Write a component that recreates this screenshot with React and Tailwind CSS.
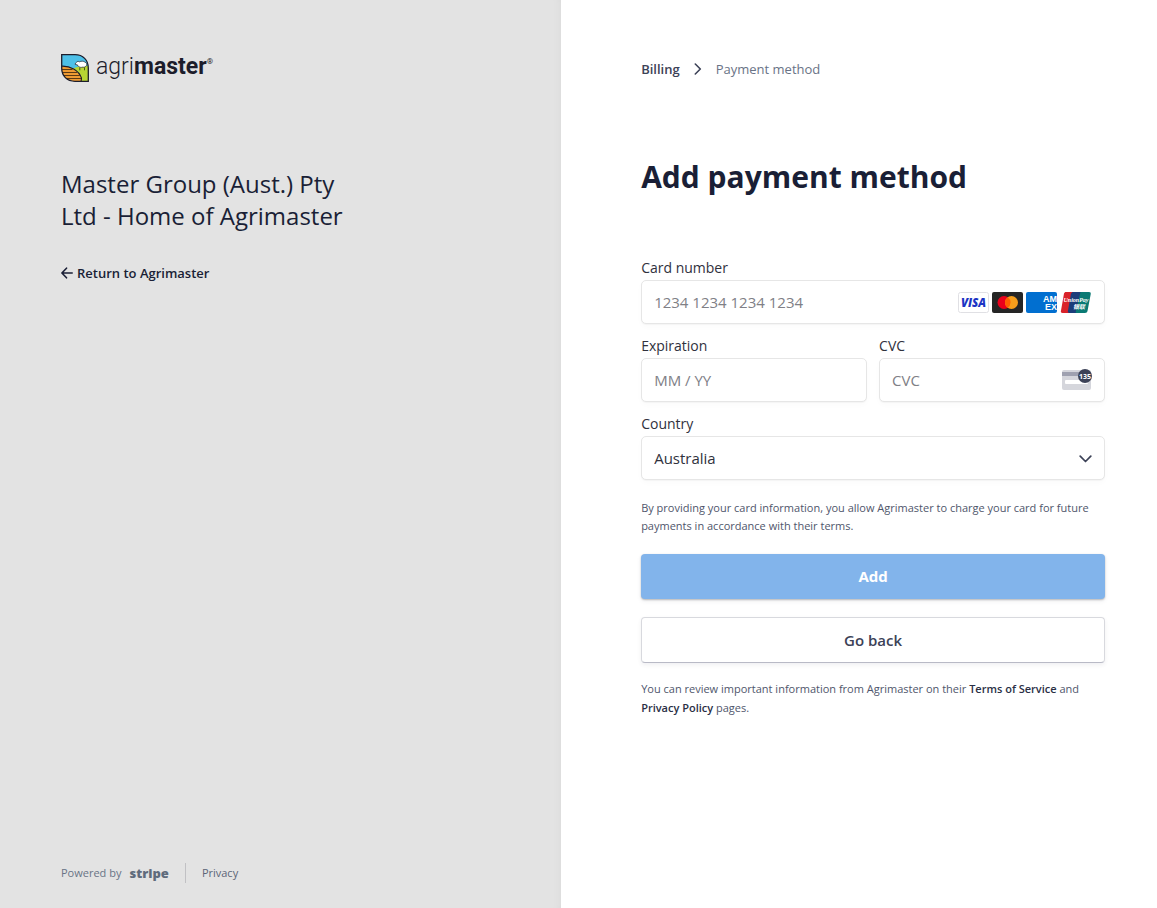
import React, { useState } from "react";

const inputClass =
  "block w-full h-11 rounded-[5px] border border-[#e6e6e6] bg-white px-3 text-[15px] text-[#30313d] placeholder:text-[#808086] shadow-[0_1px_1px_rgba(0,0,0,0.03),0_3px_6px_rgba(0,0,0,0.02)] outline-none focus:border-[#0570de]";

const labelClass = "block mb-[3px] text-[14px] leading-[19px] text-[#30313d]";

function AgrimasterLogo() {
  return (
    <div className="flex h-7 items-start gap-[7px] text-[#1d1d2b]">
      <svg width="28" height="28" viewBox="0 0 28 28" aria-hidden="true">
        <defs>
          <clipPath id="leaf">
            <path d="M.7.7H14C22 .7 27.300 6 27.300 14v13.300H14C6 27.300.7 22 .7 14z" />
          </clipPath>
        </defs>
        <g clipPath="url(#leaf)">
          <rect width="28" height="28" fill="#4dc0e8" />
          <path d="M11 15c5-2.500 10-4 17-3v16H18z" fill="#b7d433" />
          <path
            d="M0 12.200c9-.6 18 4 20.500 12L20 28H0z"
            fill="#ee9a33"
            stroke="#1d1d2b"
            strokeWidth="1.100"
          />
          <path
            d="M0 15.500h11.500M0 18.500h16M2 21.500h17M4 24.500h16"
            stroke="#5c3a14"
            strokeWidth="1.100"
          />
          <path
            d="M15.500 8.300c.9-1.200 2.200-1 2.800-.5 2-.9 4.400-.8 5.600.3 1.600.6 2.200 2 1.500 3.500-.8 1.500-2.400 1.900-3.500 1.500-1.700.6-3.400.2-4-.7-.9-.1-1.500-.7-1.400-1.500l-2.300-.5c0-1.100.5-1.800 1.300-2.100z"
            fill="#fff"
            stroke="#1d1d2b"
            strokeWidth=".7"
          />
          <path d="M18.800 13.500v2.800M23.500 13.500v2.800" stroke="#3c4a1a" strokeWidth=".9" />
        </g>
        <path
          d="M.7.7H14C22 .7 27.300 6 27.300 14v13.300H14C6 27.300.7 22 .7 14z"
          fill="none"
          stroke="#1d1d2b"
          strokeWidth="1.300"
        />
      </svg>
      <span className="flex items-start font-[Roboto,sans-serif] text-[23px] leading-[26px]">
        <span className="font-light">agri</span>
        <span className="font-bold">master</span>
        <span className="text-[8px] leading-4">®</span>
      </span>
    </div>
  );
}

function CardBrands() {
  return (
    <div className="pointer-events-none absolute inset-y-0 right-[14px] flex items-center gap-[3px]">
      <svg width="31" height="21" viewBox="0 0 31 21" role="img" aria-label="Visa">
        <rect x=".5" y=".5" width="30" height="20" rx="2" fill="#fff" stroke="#e0e0e4" />
        <text x="15.500" y="14.800" textAnchor="middle" fontFamily="Open Sans, sans-serif" fontSize="11.500" fontWeight="800" fontStyle="italic" fill="#1a34c4">
          VISA
        </text>
      </svg>
      <svg width="31" height="21" viewBox="0 0 31 21" role="img" aria-label="Mastercard">
        <rect width="31" height="21" rx="2" fill="#252525" />
        <circle cx="12" cy="10.500" r="6.500" fill="#eb001b" />
        <circle cx="19.500" cy="10.500" r="6.500" fill="#f79e1b" />
        <path d="M15.750 5.200a6.500 6.500 0 0 1 0 10.600 6.500 6.500 0 0 1 0-10.600z" fill="#ff5f00" />
      </svg>
      <svg width="31" height="21" viewBox="0 0 31 21" role="img" aria-label="American Express">
        <rect width="31" height="21" rx="2" fill="#016fd0" />
        <g fontFamily="Liberation Sans, sans-serif" fontSize="9" fontWeight="700" fill="#fff">
          <text x="31" y="9.500" textAnchor="end">AM</text>
          <text x="31" y="18" textAnchor="end">EX</text>
        </g>
      </svg>
      <svg width="31" height="21" viewBox="0 0 31 21" role="img" aria-label="UnionPay">
        <path d="M6 0h8l-4 21H2.500C1 21 .5 20 1 18.500L4 1.500C4.300.6 5 0 6 0z" fill="#d9222a" />
        <path d="M12.500 0h9l-4 21H9.500C8 21 7.500 20 8 18.500l3-17z" fill="#1c3d7a" />
        <path d="M20.500 0H29c1.500 0 2 .8 1.700 2.200L27.500 19c-.3 1.300-1 2-2.500 2h-8.500C15.500 21 15.500 20 16 18.500z" fill="#0a7a74" />
        <g fontStyle="italic" fontWeight="700" fill="#fff" textAnchor="middle">
          <text x="16" y="10" fontSize="6" fontFamily="Liberation Serif, serif">UnionPay</text>
          <text x="19" y="17" fontSize="6" fontFamily="Noto Sans CJK SC, sans-serif">银联</text>
        </g>
      </svg>
    </div>
  );
}

function CvcIcon() {
  return (
    <svg
      className="pointer-events-none absolute top-[9px] right-3"
      width="32"
      height="24"
      viewBox="0 0 32 24"
      aria-hidden="true"
    >
      <rect x="1" y="3" width="29" height="20" rx="2" fill="#d5d6dc" />
      <path d="M1 5h29v4H1z" fill="#9fa1b0" />
      <rect x="4" y="13" width="23" height="4" rx="1" fill="#fff" />
      <circle cx="24" cy="9" r="7" fill="#3c4257" />
      <text x="24" y="11.500" textAnchor="middle" fontFamily="Open Sans, sans-serif" fontSize="7" fontWeight="700" fill="#fff">
        135
      </text>
    </svg>
  );
}

function Sidebar() {
  return (
    <aside className="flex w-[48.500%] flex-col bg-[#e3e3e3] pt-[54px] pr-10 pb-[25px] pl-[61px] shadow-[inset_-8px_0_10px_-8px_rgba(0,0,0,0.05)]">
      <AgrimasterLogo />
      <h2 className="mt-[86px] max-w-[300px] text-[24px] leading-8 font-medium text-[#1a1f36]">
        Master Group (Aust.) Pty Ltd - Home of Agrimaster
      </h2>
      <a
        href="#return"
        className="mt-[31px] flex items-center gap-1 text-[13px] leading-5 font-semibold text-[#1a1f36]"
      >
        <svg width="12" height="12" viewBox="0 0 12 12" fill="none" stroke="currentColor" strokeWidth="1.600" strokeLinecap="round" strokeLinejoin="round" aria-hidden="true">
          <path d="M11.200 6H1M5.500 1.200L.9 6l4.600 4.800" />
        </svg>
        Return to Agrimaster
      </a>
      <footer className="mt-auto flex h-5 items-center text-[11px] text-[#697386]">
        <a href="#stripe" className="flex items-center gap-2">
          Powered by
          <span className="text-[13px] leading-5 font-extrabold text-[#5f6b7c]">stripe</span>
        </a>
        <span className="mx-4 h-5 w-px bg-[#c1c1c4]" />
        <a href="#privacy" className="text-[#5c6577]">
          Privacy
        </a>
      </footer>
    </aside>
  );
}

export default function App() {
  const [country, setCountry] = useState("Australia");

  return (
    <div className="flex min-h-screen bg-white font-['Open_Sans',sans-serif]">
      <Sidebar />

      <main className="flex-1 pt-[59px] pr-[52px] pl-20">
        {/* Breadcrumb */}
        <nav className="flex items-center text-[13px] leading-5">
          <a href="#billing" className="font-semibold text-[#3c4257]">
            Billing
          </a>
          <svg className="mx-[14px]" width="8" height="12" viewBox="0 0 8 12" fill="none" stroke="#3c4257" strokeWidth="1.600" strokeLinecap="round" strokeLinejoin="round" aria-hidden="true">
            <path d="M1.300 1l5 5-5 5" />
          </svg>
          <span className="text-[#697386]">Payment method</span>
        </nav>

        <h1 className="mt-[78px] text-[30px] leading-10 font-bold text-[#1a1f36]">
          Add payment method
        </h1>

        <form className="mt-[61px]" onSubmit={(e) => e.preventDefault()}>
          <div className="flex flex-col gap-3">
            <div>
              <label htmlFor="number" className={labelClass}>
                Card number
              </label>
              <div className="relative">
                <input id="number" className={inputClass} placeholder="1234 1234 1234 1234" />
                <CardBrands />
              </div>
            </div>

            <div className="grid grid-cols-2 gap-3">
              <div>
                <label htmlFor="expiry" className={labelClass}>
                  Expiration
                </label>
                <input id="expiry" className={inputClass} placeholder="MM / YY" />
              </div>
              <div>
                <label htmlFor="cvc" className={labelClass}>
                  CVC
                </label>
                <div className="relative">
                  <input id="cvc" className={inputClass} placeholder="CVC" />
                  <CvcIcon />
                </div>
              </div>
            </div>

            <div>
              <label htmlFor="country" className={labelClass}>
                Country
              </label>
              <div className="relative">
                <select
                  id="country"
                  className={`appearance-none ${inputClass}`}
                  value={country}
                  onChange={(e) => setCountry(e.target.value)}
                >
                  <option>Australia</option>
                  <option>New Zealand</option>
                </select>
                <svg className="pointer-events-none absolute top-[19px] right-[13px]" width="13" height="8" viewBox="0 0 13 8" fill="none" stroke="#3c4257" strokeWidth="1.700" strokeLinecap="round" strokeLinejoin="round" aria-hidden="true">
                  <path d="M1.200 1.200l5.300 5.300 5.300-5.300" />
                </svg>
              </div>
            </div>
          </div>

          <p className="mt-[19px] text-[11px] leading-[18px] text-[#4f566b]">
            By providing your card information, you allow Agrimaster to charge your card for future
            payments in accordance with their terms.
          </p>

          <button
            type="submit"
            className="mt-[19px] h-[45px] w-full rounded-[4px] bg-[#82b4eb] text-[15px] font-bold text-white shadow-[0_1px_2px_rgba(0,0,0,0.25),0_2px_5px_rgba(60,66,87,0.08)]"
          >
            Add
          </button>
          <button
            type="button"
            className="mt-[18px] h-[46px] w-full rounded-[4px] border border-[#d8d9de] border-b-[#b9bac6] bg-white text-[15px] font-semibold text-[#3c4257] shadow-[0_2px_4px_rgba(60,66,87,0.08)]"
          >
            Go back
          </button>
        </form>

        <p className="mt-4 text-[11px] leading-[19px] text-[#4f566b]">
          You can review important information from Agrimaster on their{" "}
          <a href="#terms" className="font-semibold text-[#2a2f45]">
            Terms of Service
          </a>{" "}
          and{" "}
          <a href="#privacy-policy" className="font-semibold text-[#2a2f45]">
            Privacy Policy
          </a>{" "}
          pages.
        </p>
      </main>
    </div>
  );
}
